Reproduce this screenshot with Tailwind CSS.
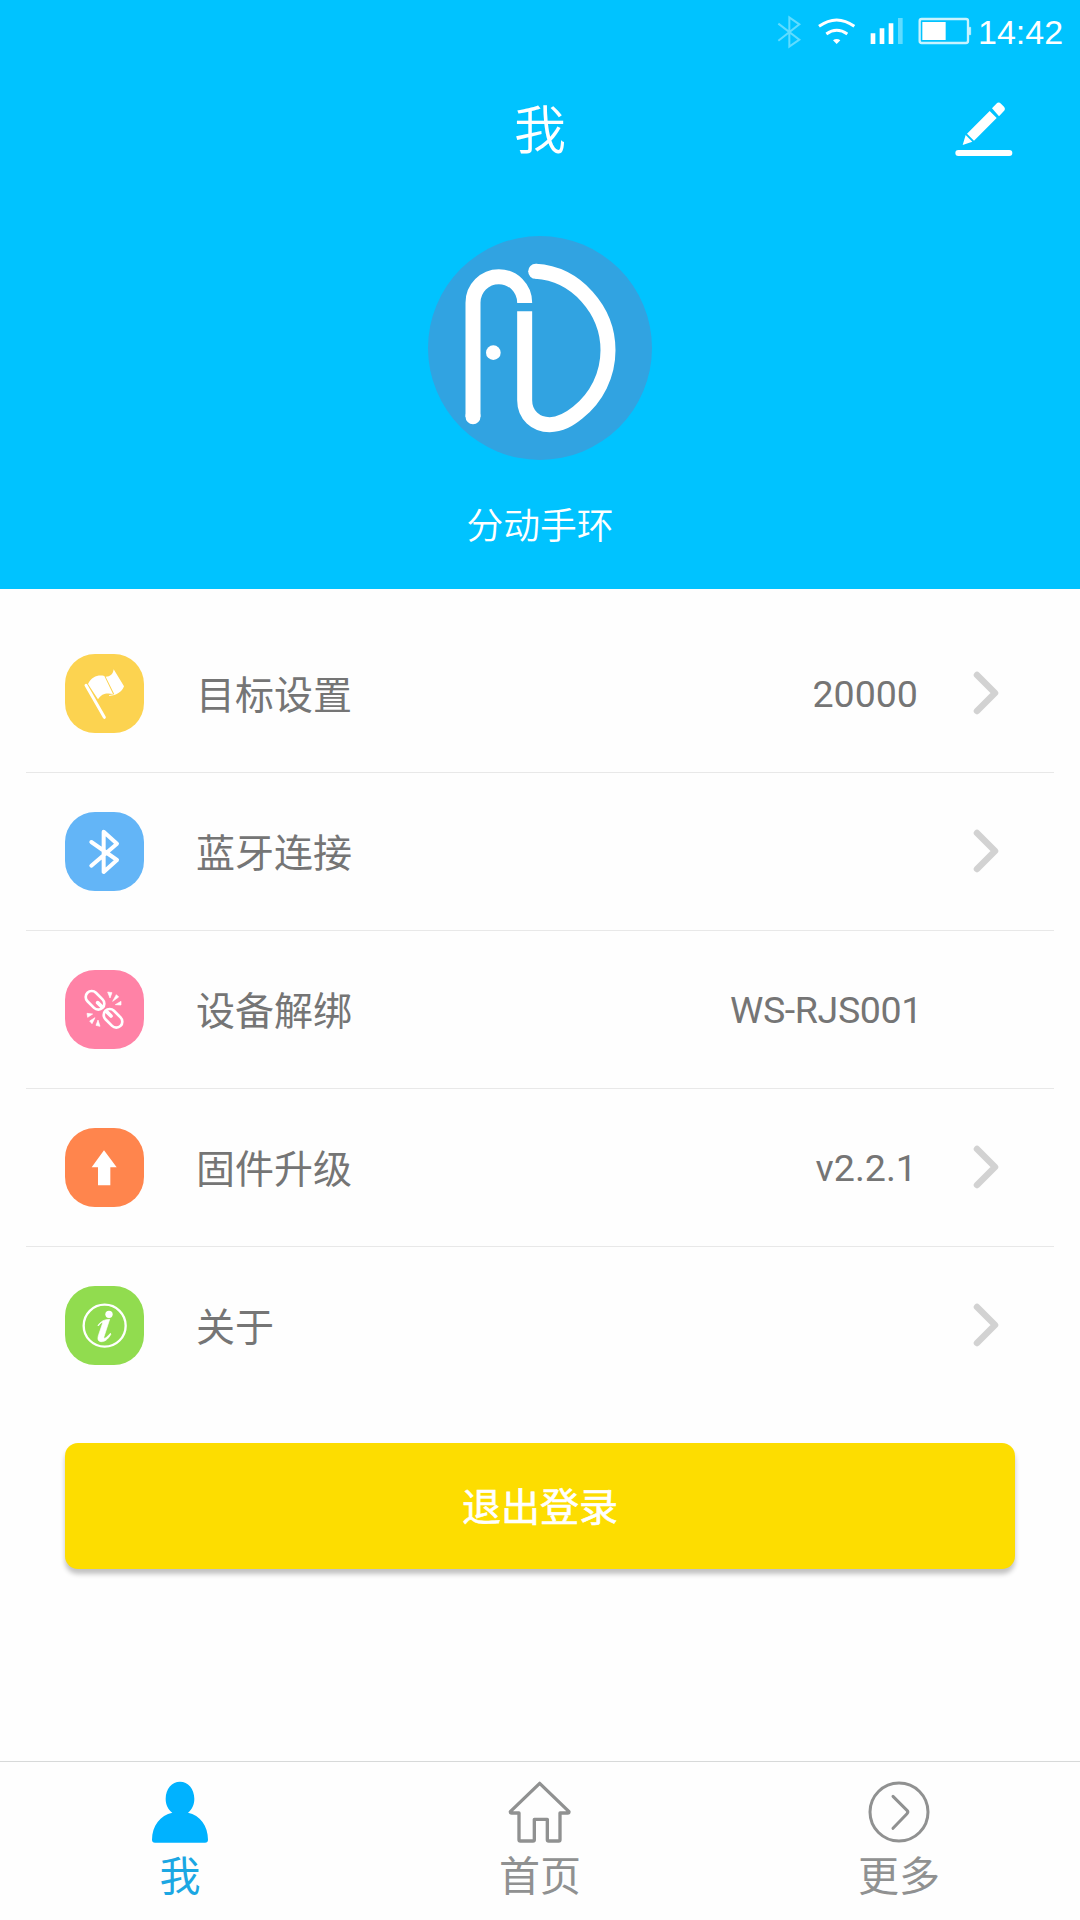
<!DOCTYPE html>
<html lang="zh-CN">
<head>
<meta charset="utf-8">
<title>我</title>
<script src="https://cdn.jsdelivr.net/npm/@tailwindcss/browser@4"></script>
</head>
<body class="w-[1080px] h-[1920px] overflow-hidden bg-[#fefefe] flex flex-col font-[Roboto,'Noto_Sans_CJK_SC',sans-serif] text-[#757575]">
<header class="h-[589px] shrink-0 bg-[#00c3ff] text-white flex flex-col items-center">
  <div class="w-full h-[62px] flex items-center justify-end pr-[16px]">
    <svg class="w-[200px] h-[62px]" viewBox="46 0 600 186" fill="none">
      <path d="M56 71L119 119L89 140V52L119 73L56 122" stroke="#5fdcff" stroke-width="6"/>
      <path d="M178 79Q231 41 284 79M200 102Q231 80 263 102" stroke="#fff" stroke-width="9"/>
      <path d="M220 121Q231 113 242 121L231 132Z" fill="#fff"/>
      <path d="M333 100H347V132H333ZM360 85H374V132H360ZM387 70H401V132H387Z" fill="#fff"/>
      <path d="M415 54H429V132H415Z" fill="#5fdcff"/>
      <rect x="480" y="57" width="145" height="72" rx="6" stroke="#c8f3ff" stroke-width="7"/>
      <path d="M488 66H558V120H488Z" fill="#fff"/>
      <path d="M627 82H633V104H627Z" fill="#c8f3ff" stroke="#c8f3ff" stroke-width="2"/>
    </svg>
    <span class="w-[89px] pl-[3px] text-[34px] leading-[62px] pt-px font-['Liberation_Sans',sans-serif]">14:42</span>
  </div>
  <div class="w-full h-[136px] grid grid-cols-[1fr_200px_1fr] items-center">
    <span></span>
    <h1 class="text-center text-[52px] leading-[76px] pt-[4px] font-[350]">我</h1>
    <svg class="w-[58px] h-[56px] justify-self-end mr-[67px] mb-[2px]" viewBox="586 303 174 168" fill="#fff">
      <path d="M697 325L710 311Q717 304 724 311L733 320Q739 327 732 334L718 349ZM690 333L711 354L643 422L622 401ZM618 405L638 425L609 435Z"/>
      <rect x="587" y="450" width="171" height="18" rx="9"/>
    </svg>
  </div>
  <svg class="w-[224px] h-[224px] mt-[38px] mr-px shrink-0" viewBox="51 467 672 672" fill="none">
    <circle cx="387" cy="803" r="336" fill="#31a3e1"/>
    <g stroke="#fff" stroke-width="45">
      <path d="M186 1009V667A77.5 78 0 0 1 341 667V668"/>
      <path d="M341 693V960C341 1004 374 1033 416 1033C450 1033 474 1018 500 997C557 952 591 884 591 810C591 690 496 580 374 573"/>
    </g>
    <g fill="#fff"><circle cx="186" cy="1009" r="22.5"/><circle cx="374" cy="573" r="22.5"/><circle cx="247" cy="817" r="22"/></g>
  </svg>
  <p class="mt-[40px] text-[36.8px] leading-[54px] font-[350]">分动手环</p>
</header>

<main class="flex flex-col px-[26px] pt-[26px]">
  <div class="h-[158px] border-b border-[#e8e8e8] flex items-center pl-[39px] pr-[55px]">
    <svg class="w-[79px] h-[79px]" viewBox="75 71 237 237">
      <rect x="75" y="71" width="237" height="237" rx="90" fill="#fcd350"/>
      <path d="M138 165L193 261" stroke="#fff" stroke-width="9" stroke-linecap="round"/>
      <path d="M144 161C156 138 174 133 193 137L219 191C199 187 184 190 174 207Z" fill="#fff"/>
      <path d="M197 139C211 139 219 132 221 117L252 168C246 184 231 195 207 197L208 194L223 192Z" fill="#fff"/>
    </svg>
    <span class="ml-[52px] text-[39px] leading-[58px] pt-[5px]">目标设置</span>
    <span class="ml-auto pt-[2px] text-[37.6px]">20000</span>
    <svg class="w-[26px] h-[44px] ml-[55px] mb-px" viewBox="0 0 26 44" fill="none" stroke="#d2d2d2" stroke-width="6.5" stroke-linecap="round" stroke-linejoin="round"><path d="M4 4L22 22L4 40"/></svg>
  </div>
  <div class="h-[158px] border-b border-[#e8e8e8] flex items-center pl-[39px] pr-[55px]">
    <svg class="w-[79px] h-[79px]" viewBox="75 545 237 237">
      <rect x="75" y="545" width="237" height="237" rx="90" fill="#63b5f7"/>
      <path d="M154 635L231 689L191 725V604L231 640L154 706" fill="none" stroke="#fff" stroke-width="12" stroke-linecap="round" stroke-linejoin="round"/>
    </svg>
    <span class="ml-[52px] text-[39px] leading-[58px] pt-[5px]">蓝牙连接</span>
    <svg class="w-[26px] h-[44px] ml-auto mb-px" viewBox="0 0 26 44" fill="none" stroke="#d2d2d2" stroke-width="6.5" stroke-linecap="round" stroke-linejoin="round"><path d="M4 4L22 22L4 40"/></svg>
  </div>
  <div class="h-[158px] border-b border-[#e8e8e8] flex items-center pl-[39px] pr-[55px]">
    <svg class="w-[79px] h-[79px]" viewBox="75 89 237 237">
      <rect x="75" y="89" width="237" height="237" rx="90" fill="#ff82a6"/>
      <g fill="none" stroke="#fff" stroke-width="8">
        <rect x="-32" y="-18" width="64" height="36" rx="18" transform="translate(165 180) rotate(45)"/>
        <rect x="-32" y="-18" width="64" height="36" rx="18" transform="translate(219 234) rotate(45)"/>
        <path d="M173 187L185 199M200 214L213 227" stroke-width="11" stroke-linecap="round"/>
      </g>
      <path d="M203 155L216 157L210 173ZM229 163L236 170L218 183ZM243 183V194L226 193ZM141 219L158 221L143 231ZM165 232L156 250L149 242ZM174 239L180 258L168 255Z" fill="#fff" stroke="#fff" stroke-width="2"/>
    </svg>
    <span class="ml-[52px] text-[39px] leading-[58px] pt-[5px]">设备解绑</span>
    <span class="ml-auto mr-[77px] pt-[2px] text-[37.6px] tracking-[-0.4px]">WS-RJS001</span>
  </div>
  <div class="h-[158px] border-b border-[#e8e8e8] flex items-center pl-[39px] pr-[55px]">
    <svg class="w-[79px] h-[79px]" viewBox="75 563 237 237">
      <rect x="75" y="563" width="237" height="237" rx="90" fill="#ff854d"/>
      <path d="M192 630L230 681H211V735H174V681H155Z" fill="#fff"/>
    </svg>
    <span class="ml-[52px] text-[39px] leading-[58px] pt-[5px]">固件升级</span>
    <span class="ml-auto pt-[2px] text-[37.6px]">v2.2.1</span>
    <svg class="w-[26px] h-[44px] ml-[56px] mb-px" viewBox="0 0 26 44" fill="none" stroke="#d2d2d2" stroke-width="6.5" stroke-linecap="round" stroke-linejoin="round"><path d="M4 4L22 22L4 40"/></svg>
  </div>
  <div class="h-[157px] flex items-center pl-[39px] pr-[55px]">
    <svg class="w-[79px] h-[79px]" viewBox="75 107 237 237">
      <rect x="75" y="107" width="237" height="237" rx="90" fill="#91dc4f"/>
      <circle cx="194" cy="226" r="63" fill="none" stroke="#fff" stroke-width="7"/>
      <circle cx="207" cy="192" r="11" fill="#fff"/>
      <path d="M174 225C182 213 194 207 209 207L192 259C190 266 196 267 211 249L213 251C204 268 193 275 183 274C173 273 172 265 176 253L187 221C189 213 184 215 175 227Z" fill="#fff" stroke="#fff" stroke-width="2"/>
    </svg>
    <span class="ml-[52px] text-[39px] leading-[58px] pt-[5px]">关于</span>
    <svg class="w-[26px] h-[44px] ml-auto mb-px" viewBox="0 0 26 44" fill="none" stroke="#d2d2d2" stroke-width="6.5" stroke-linecap="round" stroke-linejoin="round"><path d="M4 4L22 22L4 40"/></svg>
  </div>
  <button class="mx-[39px] mt-[39px] h-[126px] pt-[5px] rounded-[13px] bg-[#fddd00] text-white text-[39px] font-normal [-webkit-text-stroke:0.6px_white] shadow-[0_5px_5px_rgba(0,0,0,0.24)]">退出登录</button>
</main>

<nav class="mt-auto h-[159px] border-t border-[#d7d9d9] grid grid-cols-3 text-[41px] leading-[60px] text-[#909191]">
  <div class="flex flex-col items-center pt-[19px]">
    <svg class="w-[58px] h-[62px]" viewBox="153 92 174 186" fill="#00b2ff"><path d="M240 94C264 94 283 115 283 145C283 163 276 177 264 187C300 194 324 226 324 268Q324 277 315 277H165Q156 277 156 268C156 226 181 194 217 187C204 177 197 163 197 145C197 115 216 94 240 94Z"/></svg>
    <span class="mt-[4px] text-[#1ba7e3]">我</span>
  </div>
  <div class="flex flex-col items-center pt-[19px]">
    <svg class="w-[64px] h-[62px]" viewBox="1224 92 192 186" fill="none" stroke="#909191" stroke-width="10" stroke-linejoin="round"><path d="M1319 99L1407 184Q1407 188 1403 188H1380V268Q1380 272 1376 272H1346Q1342 272 1342 268V207H1303V268Q1303 272 1299 272H1261Q1257 272 1257 268V188H1235Q1231 188 1231 184Z"/></svg>
    <span class="mt-[4px]">首页</span>
  </div>
  <div class="flex flex-col items-center pt-[19px] pr-[2px]">
    <svg class="w-[62px] h-[62px]" viewBox="205 92 186 186" fill="none" stroke="#909191" stroke-width="9" stroke-linecap="round" stroke-linejoin="round"><circle cx="298" cy="185" r="87"/><path d="M280 138L322 180Q327 185 322 190L280 234"/></svg>
    <span class="mt-[4px]">更多</span>
  </div>
</nav>
</body>
</html>
